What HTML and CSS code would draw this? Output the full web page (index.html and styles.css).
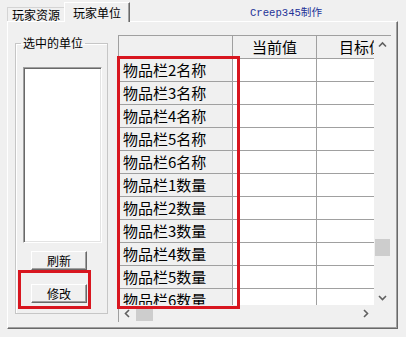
FILE: index.html
```html
<!DOCTYPE html>
<html lang="zh-CN">
<head>
    <meta charset="UTF-8">
    <title>玩家单位</title>
    <link rel="stylesheet" href="styles.css">
</head>
<body>
    <div class="window">
        <div class="tabbar">
            <div class="tab">玩家资源</div>
            <div class="tab active">玩家单位</div>
            <div class="credit">Creep345制作</div>
        </div>

        <div class="panel">
            <fieldset class="group">
                <legend>选中的单位</legend>
                <div class="listbox"></div>
                <button class="btn">刷新</button>
                <button class="btn btn-edit">修改</button>
            </fieldset>

            <div class="grid">
                <div class="viewport">
                    <div class="row head">
                        <div class="cell"></div>
                        <div class="cell">当前值</div>
                        <div class="cell">目标值</div>
                    </div>
                    <div class="row"><div class="cell rh">物品栏2名称</div><div class="cell"></div><div class="cell"></div></div>
                    <div class="row"><div class="cell rh">物品栏3名称</div><div class="cell"></div><div class="cell"></div></div>
                    <div class="row"><div class="cell rh">物品栏4名称</div><div class="cell"></div><div class="cell"></div></div>
                    <div class="row"><div class="cell rh">物品栏5名称</div><div class="cell"></div><div class="cell"></div></div>
                    <div class="row"><div class="cell rh">物品栏6名称</div><div class="cell"></div><div class="cell"></div></div>
                    <div class="row"><div class="cell rh">物品栏1数量</div><div class="cell"></div><div class="cell"></div></div>
                    <div class="row"><div class="cell rh">物品栏2数量</div><div class="cell"></div><div class="cell"></div></div>
                    <div class="row"><div class="cell rh">物品栏3数量</div><div class="cell"></div><div class="cell"></div></div>
                    <div class="row"><div class="cell rh">物品栏4数量</div><div class="cell"></div><div class="cell"></div></div>
                    <div class="row"><div class="cell rh">物品栏5数量</div><div class="cell"></div><div class="cell"></div></div>
                    <div class="row"><div class="cell rh">物品栏6数量</div><div class="cell"></div><div class="cell"></div></div>
                </div>

                <div class="vscroll">
                    <div class="sbtn"><svg width="17" height="17"><polyline points="5,10.5 8.5,7 12,10.5" /></svg></div>
                    <div class="vtrack"><div class="vthumb"></div></div>
                    <div class="sbtn"><svg width="17" height="17"><polyline points="5,8 8.5,11.5 12,8" /></svg></div>
                </div>

                <div class="hscroll">
                    <div class="sbtn"><svg width="17" height="17"><polyline points="10,5 6.5,8.5 10,12" /></svg></div>
                    <div class="htrack"><div class="hthumb"></div></div>
                    <div class="sbtn"><svg width="17" height="17"><polyline points="7,5 10.5,8.5 7,12" /></svg></div>
                </div>

                <div class="corner"></div>
            </div>
        </div>

        <!-- red highlight boxes drawn over the screenshot -->
        <div class="mark mark-col"></div>
        <div class="mark mark-btn"></div>
    </div>
</body>
</html>
```

FILE: styles.css
```css
body {
    margin: 0;
    background: #f0f0f0;
    font-family: "Noto Sans CJK SC", "Noto Sans", sans-serif;
    font-size: 12px;
    color: #000;
}
.window {
    position: relative;
    width: 406px;
    height: 337px;
    overflow: hidden;
}

/* tabs */
.tabbar {
    display: flex;
    align-items: flex-end;
    height: 21px;
    padding-left: 7px;
}
.tab {
    box-sizing: border-box;
    width: 57px;
    height: 14px;
    border-top: 1px solid #d4d4d4;
    border-left: 1px solid #d4d4d4;
    text-align: center;
    line-height: 13px;
    white-space: nowrap;
}
.tab.active {
    position: relative;
    z-index: 1;
    width: 66px;
    height: 20px;
    margin-bottom: -1px;
    background: #f0f0f0;
    border-top: 1px solid #fff;
    border-left: 1px solid #fff;
    border-right: 1px solid #696969;
    box-shadow: inset -1px 0 #a0a0a0;
    line-height: 20px;
}
.credit {
    align-self: flex-start;
    margin: 6px 0 0 120px;
    font-family: "Liberation Mono", "Noto Sans CJK SC", monospace;
    font-size: 10.6px;
    line-height: 14px;
    color: #1f3398;
}

/* tab page */
.panel {
    box-sizing: border-box;
    display: flex;
    align-items: flex-start;
    width: 391px;
    height: 308px;
    margin-left: 7px;
    border-top: 1px solid #fff;
    border-left: 1px solid #fff;
    border-right: 1px solid #696969;
    border-bottom: 1px solid #696969;
    box-shadow: inset -1px -1px #a0a0a0;
}

/* group box */
.group {
    box-sizing: border-box;
    width: 93px;
    height: 278px;
    margin: 14px 0 0 7px;
    padding: 0 5px 0 7px;
    border: 1px solid #c6c6c6;
    box-shadow: inset 1px 1px #fff;
    min-inline-size: 0;
}
.group legend {
    margin-left: -2px;
    padding: 0 2px;
    line-height: 14px;
}
.listbox {
    box-sizing: border-box;
    width: 79px;
    height: 176px;
    margin-top: 17px;
    background: #fff;
    border-top: 1px solid #a0a0a0;
    border-left: 1px solid #a0a0a0;
    border-right: 1px solid #fff;
    border-bottom: 1px solid #fff;
    box-shadow: inset 1px 1px #696969, inset -1px -1px #e3e3e3;
}
.btn {
    display: block;
    box-sizing: border-box;
    width: 56px;
    height: 19px;
    margin: 8px 0 0 8px;
    padding: 0;
    background: #f0f0f0;
    border-top: 1px solid #fff;
    border-left: 1px solid #fff;
    border-right: 1px solid #696969;
    border-bottom: 1px solid #696969;
    box-shadow: inset -1px -1px #a0a0a0;
    font: inherit;
    line-height: 17px;
}
.btn-edit { margin-top: 14px; }

/* property grid */
.grid {
    display: grid;
    grid-template-columns: 255px 17px;
    grid-template-rows: 269px 17px;
    margin: 13px 0 0 10px;
    border-top: 1px solid #a0a0a0;
    border-left: 1px solid #a0a0a0;
    font-size: 15px;
}
.viewport {
    overflow: hidden;
    background: #fff;
}
.row {
    display: grid;
    grid-template-columns: 114px 84px 90px;
    width: 288px;
}
.cell {
    box-sizing: border-box;
    height: 23px;
    padding-left: 4px;
    border-right: 1px solid #a0a0a0;
    border-bottom: 1px solid #a0a0a0;
    line-height: 22px;
    white-space: nowrap;
    overflow: hidden;
}
.rh { background: #f0f0f0; }
.head .cell {
    padding-left: 0;
    background: #f0f0f0;
    text-align: center;
}

/* scrollbars */
.vscroll, .hscroll, .corner { background: #f0f0f0; }
.vscroll {
    display: flex;
    flex-direction: column;
}
.hscroll { display: flex; }
.sbtn {
    width: 17px;
    height: 17px;
    flex: none;
}
.sbtn svg { display: block; }
.sbtn polyline {
    fill: none;
    stroke: #606060;
    stroke-width: 1.6;
}
.vtrack { flex: 1; }
.vthumb {
    width: 15px;
    height: 17px;
    margin: 186px 0 0 1px;
    background: #cdcdcd;
}
.htrack { flex: 1; }
.hthumb {
    width: 17px;
    height: 15px;
    margin: 1px 0 0 0;
    background: #cdcdcd;
}

/* red annotation frames */
.mark {
    position: absolute;
    box-sizing: border-box;
    border: 3px solid #d8161f;
}
.mark-col {
    left: 117px;
    top: 56px;
    width: 123px;
    height: 253px;
}
.mark-btn {
    left: 18px;
    top: 270px;
    width: 73px;
    height: 39px;
}
```
